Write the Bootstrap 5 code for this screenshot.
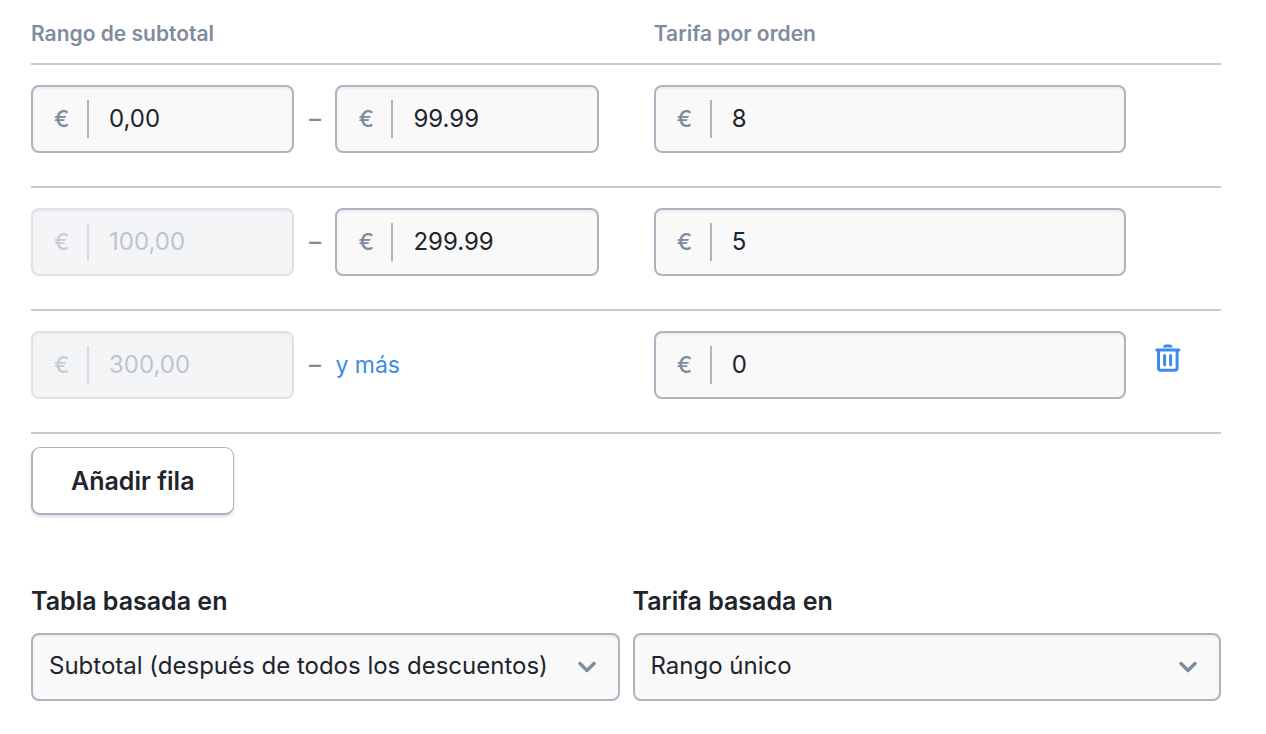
<!DOCTYPE html>
<html lang="es">
<head>
<meta charset="utf-8">
<meta name="viewport" content="width=device-width, initial-scale=1">
<title>Tarifas por subtotal</title>
<link rel="stylesheet" href="https://cdn.jsdelivr.net/npm/bootstrap@5.3.0/dist/css/bootstrap.min.css">
<style>
  :root { --ink: #20242b; --muted-ink: #7f8c9f; --edge: #abb4c0; --rule: #c4cad1; --action: #3d8be8; }
  body { font-family: Inter, "Liberation Sans", sans-serif; font-size: 24px; line-height: 32px; color: var(--ink); background: #fff; }
  .page { padding: 16px 45px 32px 31px; }
  .rates { table-layout: fixed; width: 100%; }
  .rates tr { border-bottom: 2px solid var(--rule); }
  .rates th { padding: 2px 0 13px; font-size: 21px; font-weight: 600; color: var(--muted-ink); }
  .rates td { padding: 20px 0 33px; vertical-align: top; }
  .rates .col-range { width: 52%; padding-right: 51px; }
  .rates .col-rate { width: 40%; padding-left: 4px; }
  .rates .col-action { width: 8%; padding-left: 29px; }
  .dash { width: 41px; text-align: center; font-weight: 500; color: var(--muted-ink); }
  .money, .picker { height: 68px; border: 2px solid var(--edge); border-radius: 8px; background-color: #f9f9f9; box-shadow: inset 0 2px 2px #eceeef; }
  .money { flex: 1 1 0; }
  .open-end { flex: 1 1 4px; font-size: 23px; }
  .money .input-group-text { width: 56px; margin: 13px 0; padding: 0 0 0 21px; border: 0; border-right: 2px solid var(--edge); border-radius: 0; background: none; font-size: 23px; font-weight: 500; color: var(--muted-ink); }
  .money .form-control { padding: 0 20px 1px 21px; border: 0; background: none; font-size: 24px; color: var(--ink); }
  .money.is-locked { border-color: #dee1e5; background-color: #f4f5f7; }
  .money.is-locked .input-group-text { border-color: #dadee3; color: #c8cdd5; }
  .money.is-locked .form-control { color: #c0c5cb; }
  .more { color: var(--action); }
  .remove { margin-top: 13px; line-height: 0; color: var(--action); }
  .add-row { height: 68px; margin-top: 13px; padding: 2px 38px 0; border: 1px solid var(--edge); border-left-width: 2px; border-bottom-width: 2px; border-radius: 9px; background: #fff; box-shadow: 0 2px 3px #dde0e4; font-size: 25px; font-weight: 600; color: var(--ink); }
  .basis { margin-top: 70px; display: grid; grid-template-columns: 1fr 1fr; gap: 13px; }
  .basis label { margin-bottom: 16px; font-size: 25px; font-weight: 600; }
  .picker { padding: 0 60px 2px 16px; font-size: 24px; color: var(--ink); background-size: 18px 12px; background-position: right 22px center; background-image: url("data:image/svg+xml,%3Csvg xmlns='http://www.w3.org/2000/svg' viewBox='0 0 18 12'%3E%3Cpath d='M2 2.5l7 7 7-7' fill='none' stroke='%237f8c9f' stroke-width='3.4' stroke-linecap='round' stroke-linejoin='round'/%3E%3C/svg%3E"); }
</style>
</head>
<body>
<main class="page">
  <table class="rates">
    <thead>
      <tr>
        <th class="col-range" scope="col">Rango de subtotal</th>
        <th class="col-rate" scope="col">Tarifa por orden</th>
        <th class="col-action"></th>
      </tr>
    </thead>
    <tbody>
      <tr>
        <td class="col-range">
          <div class="d-flex align-items-center">
            <div class="money input-group flex-nowrap"><label class="input-group-text" for="from1">€</label><input class="form-control" id="from1" type="text" value="0,00"></div>
            <span class="dash">–</span>
            <div class="money input-group flex-nowrap"><label class="input-group-text" for="to1">€</label><input class="form-control" id="to1" type="text" value="99.99"></div>
          </div>
        </td>
        <td class="col-rate"><div class="money input-group flex-nowrap"><label class="input-group-text" for="rate1">€</label><input class="form-control" id="rate1" type="text" value="8"></div></td>
        <td class="col-action"></td>
      </tr>
      <tr>
        <td class="col-range">
          <div class="d-flex align-items-center">
            <div class="money is-locked input-group flex-nowrap"><label class="input-group-text" for="from2">€</label><input class="form-control" id="from2" type="text" value="100,00" disabled></div>
            <span class="dash">–</span>
            <div class="money input-group flex-nowrap"><label class="input-group-text" for="to2">€</label><input class="form-control" id="to2" type="text" value="299.99"></div>
          </div>
        </td>
        <td class="col-rate"><div class="money input-group flex-nowrap"><label class="input-group-text" for="rate2">€</label><input class="form-control" id="rate2" type="text" value="5"></div></td>
        <td class="col-action"></td>
      </tr>
      <tr>
        <td class="col-range">
          <div class="d-flex align-items-center">
            <div class="money is-locked input-group flex-nowrap"><label class="input-group-text" for="from3">€</label><input class="form-control" id="from3" type="text" value="300,00" disabled></div>
            <span class="dash">–</span>
            <div class="open-end"><a class="more text-decoration-none" href="#">y más</a></div>
          </div>
        </td>
        <td class="col-rate"><div class="money input-group flex-nowrap"><label class="input-group-text" for="rate3">€</label><input class="form-control" id="rate3" type="text" value="0"></div></td>
        <td class="col-action">
          <button class="remove btn p-0 border-0" type="button" aria-label="Eliminar fila">
            <svg width="26" height="28" viewBox="0 0 26 28" fill="none" stroke="currentColor" stroke-width="3" stroke-linecap="round" stroke-linejoin="round" aria-hidden="true">
              <path d="M1.8 5.9h22M3.5 6v18q0 2.2 2.2 2.2h14.2q2.2 0 2.2-2.2V6M9.6 11.5v9.2M15.6 11.5v9.2"/>
              <path d="M8 3.4Q8.3.4 10.8.4H14.800Q17.3.4 17.6 3.4z" fill="currentColor" stroke="none"/>
            </svg>
          </button>
        </td>
      </tr>
    </tbody>
  </table>

  <button class="add-row btn" type="button">Añadir fila</button>

  <div class="basis">
    <div>
      <label class="d-block" for="table-basis">Tabla basada en</label>
      <select class="picker form-select" id="table-basis"><option>Subtotal (después de todos los descuentos)</option></select>
    </div>
    <div>
      <label class="d-block" for="rate-basis">Tarifa basada en</label>
      <select class="picker form-select" id="rate-basis"><option>Rango único</option></select>
    </div>
  </div>
</main>
<script src="https://cdn.jsdelivr.net/npm/bootstrap@5.3.0/dist/js/bootstrap.bundle.min.js"></script>
</body>
</html>
